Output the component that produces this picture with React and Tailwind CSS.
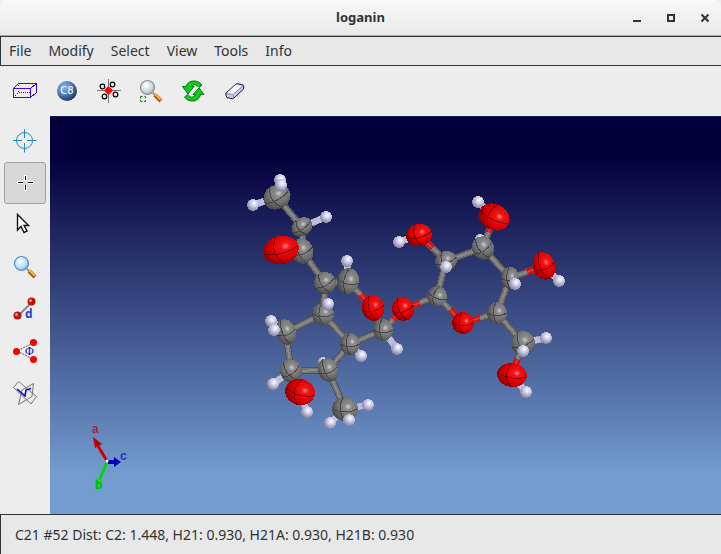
import { useState } from 'react';

const menus = ['File', 'Modify', 'Select', 'View', 'Tools', 'Info'];

const atomFill = { C: 'url(#carbon)', O: 'url(#oxygen)', H: 'url(#hydrogen)' };
const bondFill = { C: '#737373', O: '#d41010', H: '#bdbde0' };

// id: [element, x, y, rx, ry, tilt]
const atoms = {
    h1: ['H', 280, 180, 6, 6, 0],
    c1: ['C', 277, 197, 14, 12, -30],
    h2: ['H', 281, 185, 6, 6, 0],
    h3: ['H', 253, 205, 6, 6, 0],
    c2: ['C', 302, 227, 11, 9, -35],
    h4: ['H', 326, 217, 6, 6, 0],
    c3: ['C', 302, 251, 11, 13, -20],
    o1: ['O', 281, 250, 18, 14, -14],
    c5: ['C', 348, 281, 11, 13, 12],
    c4: ['C', 325, 283, 11, 11, -30],
    h5: ['H', 347, 261, 6, 6, 0],
    c6: ['C', 323, 314, 11, 11, 0],
    h6: ['H', 328, 304, 6, 6, 0],
    o2: ['O', 373, 308, 11, 13, -15],
    c7: ['C', 286, 332, 10, 13, -20],
    h7: ['H', 271, 321, 6, 6, 0],
    h8: ['H', 274, 330, 6, 6, 0],
    c8: ['C', 383, 330, 10, 11, 0],
    o3: ['O', 403, 309, 11, 12, -20],
    h9: ['H', 397, 349, 6, 6, 0],
    c9: ['C', 350, 344, 10, 11, 0],
    h10: ['H', 361, 356, 6, 6, 0],
    h11: ['H', 323, 362, 5, 5, 0],
    c10: ['C', 328, 370, 10, 12, -20],
    c11: ['C', 291, 371, 11, 12, -35],
    h12: ['H', 273, 384, 6, 6, 0],
    h13: ['H', 307, 412, 6, 6, 0],
    o4: ['O', 300, 392, 15, 13, 15],
    c12: ['C', 345, 409, 13, 12, 0],
    h14: ['H', 368, 405, 6, 6, 0],
    h15: ['H', 330, 423, 6, 6, 0],
    h16: ['H', 349, 420, 6, 6, 0],
    c13: ['C', 437, 296, 10, 10, 20],
    c14: ['C', 446, 261, 11, 10, -20],
    h17: ['H', 446, 267, 6, 6, 0],
    h18: ['H', 399, 242, 6, 6, 0],
    o5: ['O', 419, 235, 13, 11, -15],
    h19: ['H', 480, 239, 5, 5, 0],
    c15: ['C', 483, 248, 11, 12, -35],
    h20: ['H', 478, 202, 6, 6, 0],
    o6: ['O', 494, 217, 16, 13, 25],
    c16: ['C', 510, 278, 9, 11, 0],
    h21: ['H', 515, 284, 6, 6, 0],
    h22: ['H', 559, 281, 6, 6, 0],
    o7: ['O', 544, 266, 11, 14, -20],
    o8: ['O', 463, 323, 11, 11, 0],
    c17: ['C', 497, 313, 10, 11, 0],
    c18: ['C', 523, 343, 12, 12, -20],
    h23: ['H', 546, 338, 6, 6, 0],
    h24: ['H', 523, 351, 6, 6, 0],
    h25: ['H', 526, 392, 6, 6, 0],
    o9: ['O', 512, 375, 15, 12, 8],
};

const bonds = [
    ['c1', 'h1'], ['c1', 'h3'], ['c1', 'c2'], ['c2', 'h4'], ['c2', 'c3'],
    ['c3', 'o1'], ['c3', 'c4'], ['c4', 'c5'], ['c5', 'h5'], ['c5', 'o2'],
    ['c4', 'c6'], ['c6', 'c7'], ['c6', 'c9'], ['c9', 'c8'], ['c8', 'o2'],
    ['c8', 'o3'], ['c8', 'h9'], ['c9', 'h10'], ['c7', 'c11'], ['c7', 'h7'],
    ['c11', 'c10'], ['c11', 'h12'], ['c9', 'c10'], ['c10', 'c12'], ['o4', 'h13'],
    ['c12', 'h14'], ['c12', 'h15'], ['o3', 'c13'], ['c13', 'c14'], ['c13', 'o8'],
    ['c14', 'o5'], ['o5', 'h18'], ['c14', 'c15'], ['c15', 'o6'], ['o6', 'h20'],
    ['c15', 'c16'], ['c16', 'o7'], ['o7', 'h22'], ['c16', 'c17'], ['o8', 'c17'],
    ['c17', 'c18'], ['c18', 'h23'], ['c18', 'o9'], ['o9', 'h25'],
];

function Bond({ from, to }) {
    const [el1, x1, y1] = atoms[from];
    const [el2, x2, y2] = atoms[to];
    const mx = (x1 + x2) / 2;
    const my = (y1 + y2) / 2;
    return (
        <g>
            <path d={`M${x1} ${y1}L${x2} ${y2}`} stroke={el2 === 'H' ? '#9292ae' : '#505050'} strokeWidth="7" />
            <path d={`M${x1} ${y1}L${mx} ${my}`} stroke={bondFill[el2 === 'H' ? 'H' : el1]} strokeWidth="5" />
            <path d={`M${mx} ${my}L${x2} ${y2}`} stroke={bondFill[el2]} strokeWidth={el2 === 'C' ? 5 : 6} />
            {el2 !== 'H' && <path d={`M${x1} ${y1}L${x2} ${y2}`} stroke="#fff" strokeOpacity=".16" strokeWidth="2" />}
        </g>
    );
}

function Atom({ atom }) {
    const [el, x, y, rx, ry, tilt] = atom;
    return (
        <g transform={`translate(${x} ${y}) rotate(${tilt})`}>
            <ellipse rx={rx} ry={ry} fill={atomFill[el]} />
            {el !== 'H' && (
                <path
                    d={`M${-rx} 0Q0 ${ry * 0.5} ${rx} 0M${-rx * 0.1} ${-ry}Q${-rx * 0.7} 0 0 ${ry}`}
                    fill="none"
                    stroke={el === 'O' ? '#650000' : '#353535'}
                    strokeOpacity=".75"
                />
            )}
        </g>
    );
}

function Molecule() {
    return (
        <svg className="block h-full w-full" viewBox="50 117 671 397" role="img" aria-label="Molecule">
            <defs>
                <radialGradient id="carbon" cx=".62" cy=".4" r=".65">
                    <stop offset="0" stopColor="#d0d0d0" />
                    <stop offset=".2" stopColor="#8c8c8c" />
                    <stop offset=".6" stopColor="#717171" />
                    <stop offset="1" stopColor="#484848" />
                </radialGradient>
                <radialGradient id="oxygen" cx=".65" cy=".4" r=".68">
                    <stop offset="0" stopColor="#ff8080" />
                    <stop offset=".18" stopColor="#f01515" />
                    <stop offset=".6" stopColor="#dc0000" />
                    <stop offset="1" stopColor="#8c0000" />
                </radialGradient>
                <radialGradient id="hydrogen" cx=".6" cy=".35" r=".65">
                    <stop offset="0" stopColor="#fff" />
                    <stop offset=".4" stopColor="#cfcfee" />
                    <stop offset="1" stopColor="#8484a0" />
                </radialGradient>
            </defs>
            <g shapeRendering="crispEdges">
                {bonds.map(([from, to]) => <Bond key={from + to} from={from} to={to} />)}
                {Object.entries(atoms).map(([id, atom]) => <Atom key={id} atom={atom} />)}
            </g>
            {/* Cell axes */}
            <g fontFamily="Liberation Sans" fontSize="12" fontWeight="bold">
                <path d="M107 461L98 446" stroke="#d00000" strokeWidth="3" />
                <path d="M93 437L95 448L102 444Z" fill="#b80000" />
                <path d="M107 462L99 481" stroke="#00d800" strokeWidth="3" />
                <path d="M96 491L95 478L103 481Z" fill="#10e010" />
                <path d="M108 462H115" stroke="#0000b0" strokeWidth="4" />
                <path d="M114 457L121 462L114 467Z" fill="#0000b8" />
                <circle cx="107" cy="461" r="1.5" fill="#fff" />
                <text x="92" y="433" fill="#b02038">a</text>
                <text x="95" y="489" fill="#08b020">b</text>
                <text x="120" y="460" fill="#2038c0">c</text>
            </g>
        </svg>
    );
}

function Icon({ children }) {
    return (
        <svg className="h-[30px] w-[30px]" viewBox="0 0 30 30" fill="none" aria-hidden="true">
            {children}
        </svg>
    );
}

function Lens({ light, dark, id }) {
    return (
        <>
            <defs>
                <radialGradient id={id} cx=".4" cy=".35" r=".7">
                    <stop offset="0" stopColor="#fff" />
                    <stop offset=".7" stopColor={light} />
                    <stop offset="1" stopColor={dark} />
                </radialGradient>
            </defs>
            <path d="M17 17L20 20" stroke="#888" strokeWidth="2" />
            <path d="M19 19L25 25" stroke="#9a5a10" strokeWidth="4" />
            <path d="M19 18L25 24" stroke="#f5b24a" strokeWidth="2" />
            <circle cx="11.5" cy="11.5" r="7" fill={`url(#${id})`} stroke={dark} strokeWidth="1.2" />
        </>
    );
}

const tools = [
    {
        name: 'Unit cell',
        icon: (
            <g stroke="#4400e8" shapeRendering="crispEdges">
                <path d="M3.5 12.5H20.5V21.5H3.5ZM3.5 12.5L8.5 7.5H26.5L20.5 12.5M26.5 7.5V16.5L20.5 21.5" />
                <path d="M9 16.5H20" strokeDasharray="1 1" />
                <path d="M8.5 9V16M8 17L4 21" strokeDasharray="1 2" />
            </g>
        ),
    },
    {
        name: 'Labels',
        icon: (
            <>
                <defs>
                    <radialGradient id="ball" cx=".35" cy=".3" r=".75">
                        <stop offset="0" stopColor="#86b1ec" />
                        <stop offset=".5" stopColor="#537fc0" />
                        <stop offset="1" stopColor="#1c3158" />
                    </radialGradient>
                </defs>
                <circle cx="15" cy="15" r="10" fill="url(#ball)" />
                <text x="15" y="18" textAnchor="middle" fontFamily="DejaVu Sans" fontSize="10" fill="#fff">C8</text>
            </>
        ),
    },
    {
        name: 'Center',
        icon: (
            <>
                <path d="M3 14.5H27M14.5 3V27" stroke="#777" />
                <path d="M14.5 10L19 14.5L14.5 19L10 14.5Z" fill="#f00" />
                <g stroke="#000" strokeWidth="1.2" fill="#eee">
                    <circle cx="8.5" cy="10.5" r="2.3" />
                    <circle cx="18.5" cy="8.5" r="2.3" />
                    <circle cx="10.5" cy="20.5" r="2.3" />
                    <circle cx="21.5" cy="18.5" r="2.3" />
                </g>
            </>
        ),
    },
    {
        name: 'Zoom to fit',
        icon: (
            <>
                <Lens id="lensGray" light="#c5d2d2" dark="#8c9292" />
                <path d="M4.5 22.5V20.5H6.5M8.5 20.5H9.5V22M9.5 24V25.5H8M6.5 25.5H4.5V24" stroke="#087c08" />
            </>
        ),
    },
    {
        name: 'Refresh',
        icon: (
            <g fill="#0ccf18" stroke="#087010" strokeLinejoin="round">
                <path d="M4.5 10.5H8C9 7 12 5 16 5C20 5 22 7 24 9L21 11.5C18 8 15 8 13.5 10.5H16L10 18Z" />
                <path d="M26 18.5H22.5C21.5 23 18 25 15 25C11 25 9 24 6.5 21L10 18.5C12 22 15.5 22 17.5 18.5H15L21 12Z" />
            </g>
        ),
    },
    {
        name: 'Erase',
        icon: (
            <g stroke="#18182c" strokeLinejoin="round">
                <path d="M6 17L16 8Q17 7.5 19 8L23 9Q24.5 10 23.5 13L14 22Q13 23 11 22.5L7 21.5Q5.5 20 6 17Z" fill="#c9cbf5" />
                <path d="M7 17L16 8.5L22 10L13 18.5Z" fill="#f5f5ff" stroke="none" />
                <path d="M7 17.5L12 18.5Q14 19 13.5 22M13 18.5L23 10" stroke="#8487be" />
            </g>
        ),
    },
];

const modes = [
    {
        name: 'Rotate',
        icon: (
            <g stroke="#1a8ccc">
                <circle cx="14.5" cy="14.5" r="8" />
                <path d="M3 14.5H12M17 14.5H26.5M14.5 3V12M14.5 17V26.5" />
            </g>
        ),
    },
    {
        name: 'Crosshair',
        icon: (
            <g shapeRendering="crispEdges">
                <path d="M7 14.5H13M18 14.5H24M15.5 7V13M15.5 17V23" stroke="#fff" strokeWidth="3" />
                <path d="M8 14.5H13M18 14.5H23M15.5 8V12M15.5 17V22" stroke="#000" />
            </g>
        ),
    },
    {
        name: 'Pointer',
        icon: <path d="M7.5 4.5V20L11 16.5L14 22.5L17 21L14 15.5H18.5Z" fill="#fff" stroke="#111" strokeWidth="1.4" />,
    },
    { name: 'Zoom', icon: <Lens id="lensBlue" light="#a9dcfa" dark="#5b8fbb" /> },
    {
        name: 'Distance',
        icon: (
            <>
                <path d="M8 22L22 8" stroke="#888" strokeWidth="2" />
                <circle cx="21.5" cy="7.5" r="4" fill="#b81408" />
                <circle cx="7.5" cy="21.5" r="4" fill="#b81408" />
                <circle cx="20.5" cy="6.5" r="1.5" fill="#f89080" />
                <circle cx="6.5" cy="20.5" r="1.5" fill="#f89080" />
                <text x="15" y="24" fontFamily="Open Sans" fontSize="12" fontWeight="bold" fill="#2a3ed8">d</text>
            </>
        ),
    },
    {
        name: 'Angle',
        icon: (
            <>
                <path d="M23 7L7 15L23 23" stroke="#555" strokeDasharray="2 1" />
                <g fill="#fb0000">
                    <circle cx="23.5" cy="6.5" r="3.5" />
                    <circle cx="6.5" cy="15.5" r="3.5" />
                    <circle cx="23.5" cy="23.5" r="3.5" />
                </g>
                <text x="19.5" y="19" textAnchor="middle" fontFamily="Liberation Serif" fontSize="12" fill="#1010c0">Φ</text>
            </>
        ),
    },
    {
        name: 'Planes',
        icon: (
            <>
                <g stroke="#777">
                    <path d="M8.5 3.5L3.5 9.5L21 26L26.5 18.5Z" />
                    <path d="M23.5 5.5L12 12L8.5 26.5L22 18.5Z" />
                </g>
                <path d="M7 11L15 18L16 12L21 10.5" stroke="#0808c8" strokeWidth="1.6" />
            </>
        ),
    },
];

function ToolButton({ name, active, onClick, children }) {
    return (
        <button
            type="button"
            aria-label={name}
            title={name}
            onClick={onClick}
            className={`flex h-[42px] w-[42px] shrink-0 items-center justify-center rounded-[3px] border ${
                active ? 'border-[#a1a1a1] bg-[#d8d8d8]' : 'border-transparent'
            }`}
        >
            <Icon>{children}</Icon>
        </button>
    );
}

export default function App() {
    const [mode, setMode] = useState('Crosshair');

    return (
        <div className="flex min-h-screen flex-col bg-[#ededed] font-['Noto_Sans',sans-serif] text-sm text-[#2e3436]">
            {/* Title bar */}
            <header className="grid h-9 grid-cols-[1fr_auto_1fr] items-center rounded-t-md border-b border-[#a8aaaa] bg-linear-to-b from-[#f8f8f8] to-[#e9e9e9]">
                <h1 className="col-start-2 text-[13px] font-bold">loganin</h1>
                <div className="flex justify-end gap-[10px] pr-1">
                    <button type="button" aria-label="Minimize" className="flex h-6 w-6 items-center justify-center">
                        <svg className="h-3 w-3" viewBox="0 0 12 12"><path d="M2 9H10" stroke="#2e3436" strokeWidth="2" /></svg>
                    </button>
                    <button type="button" aria-label="Maximize" className="flex h-6 w-6 items-center justify-center">
                        <svg className="h-3 w-3" viewBox="0 0 12 12"><path d="M3 3H9V9H3Z" fill="none" stroke="#2e3436" strokeWidth="2" /></svg>
                    </button>
                    <button type="button" aria-label="Close" className="flex h-6 w-6 items-center justify-center">
                        <svg className="h-3 w-3" viewBox="0 0 12 12"><path d="M2.5 2.5L9.5 9.5M9.5 2.5L2.5 9.5" stroke="#2e3436" strokeWidth="2" /></svg>
                    </button>
                </div>
            </header>

            {/* Menu bar */}
            <nav className="flex h-[30px] items-center gap-[17px] border-y border-l border-[#2e3436] bg-[#e8e8e8] px-2">
                {menus.map((menu) => (
                    <button key={menu} type="button">{menu}</button>
                ))}
            </nav>

            <div className="flex h-[50px] items-center px-1">
                {tools.map((tool) => (
                    <ToolButton key={tool.name} name={tool.name}>{tool.icon}</ToolButton>
                ))}
            </div>

            <div className="flex min-h-0 flex-1">
                <aside className="flex w-[50px] shrink-0 flex-col items-center pt-1">
                    {modes.map((m) => (
                        <ToolButton key={m.name} name={m.name} active={m.name === mode} onClick={() => setMode(m.name)}>
                            {m.icon}
                        </ToolButton>
                    ))}
                </aside>
                <main className="relative min-w-0 flex-1 border-t border-[#151c52] bg-linear-to-b/srgb from-[#04003c] from-10% to-[#739ccf] to-90%">
                    <div className="absolute inset-0">
                        <Molecule />
                    </div>
                </main>
            </div>

            <footer className="flex h-10 items-center border-t border-l border-[#2e3436] bg-[#e8e8e8] px-[14px]">
                C21 #52 Dist: C2: 1.448, H21: 0.930, H21A: 0.930, H21B: 0.930
            </footer>
        </div>
    );
}
